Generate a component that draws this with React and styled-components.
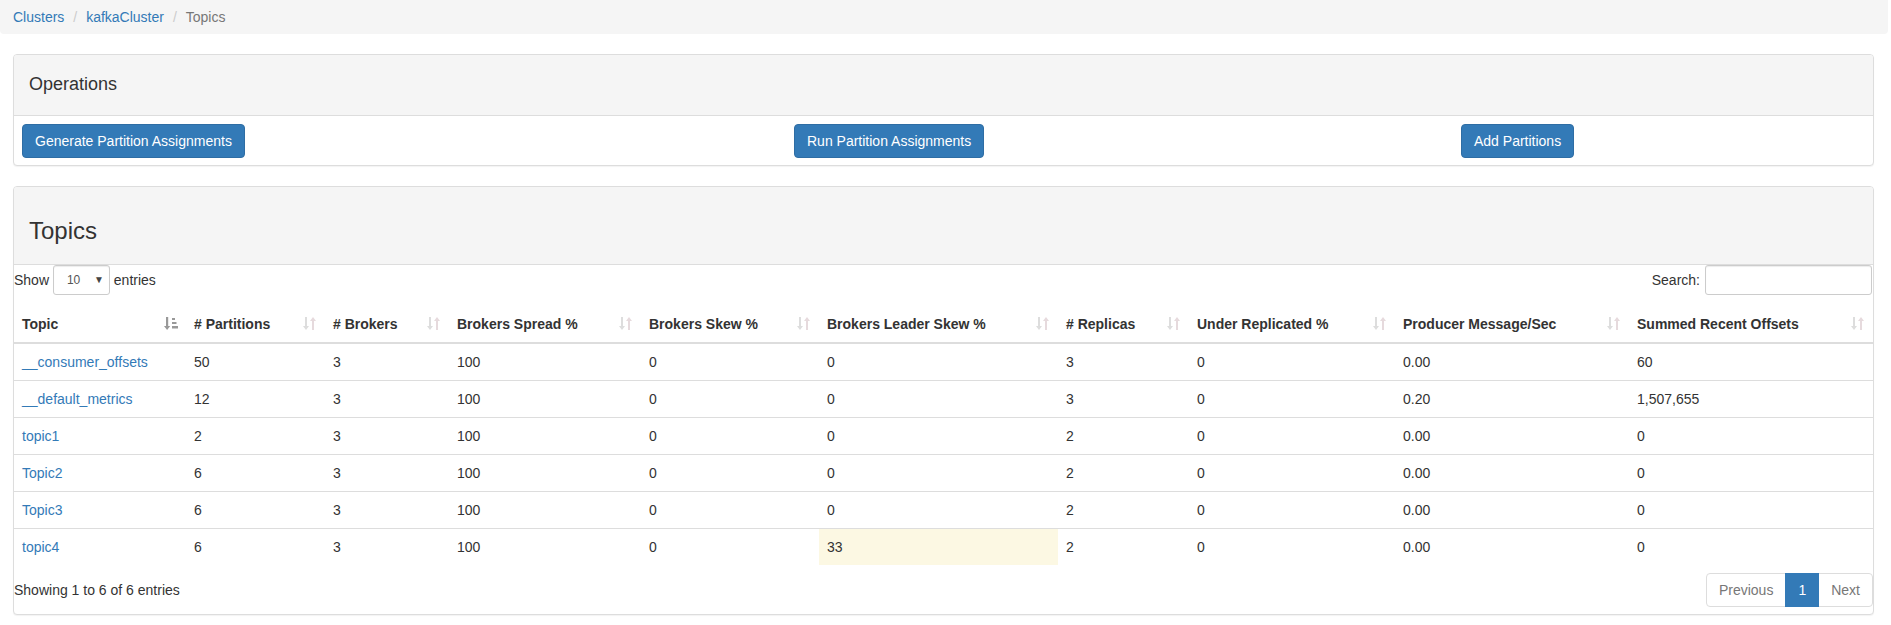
import React from 'react'
import styled, { createGlobalStyle } from 'styled-components'

const GlobalStyle = createGlobalStyle`
  * { box-sizing: border-box; }
  body {
    margin: 0;
    font-family: "Liberation Sans", Arial, Helvetica, sans-serif;
    font-size: 14px;
    line-height: 20px;
    color: #333;
    background: #fff;
  }
`

const Breadcrumb = styled.ol`
  display: flex;
  list-style: none;
  margin: 0 3px 20px 0;
  padding: 7px 13px;
  background-color: #f5f5f5;
  border-radius: 0 0 4px 4px;

  & > li + li::before {
    content: '/\\00a0';
    padding: 0 5px 0 9px;
    color: #ccc;
  }
`

const Crumb = styled.li`
  color: ${props => (props.active ? '#777' : '#337ab7')};
`

const Page = styled.div`
  padding: 0 17px 0 13px;
`

const Panel = styled.div`
  border: 1px solid #ddd;
  border-radius: 4px;
  background: #fff;
  box-shadow: 0 1px 1px rgba(0, 0, 0, 0.05);
  margin-bottom: 20px;
  overflow: hidden;
`

const PanelHeading = styled.div`
  background: #f5f5f5;
  border-bottom: 1px solid #ddd;
  padding: 10px 15px;
`

const H4 = styled.h4`
  margin: 10px 0;
  font-size: 18px;
  font-weight: 500;
  line-height: 19.8px;
`

const H3 = styled.h3`
  margin: 20px 0 10px;
  font-size: 24px;
  font-weight: 500;
  line-height: 27px;
`

const OpsBody = styled.div`
  display: grid;
  grid-template-columns: 772fr 667fr 404fr;
  padding: 8px 8px 7px;
`

const Button = styled.button`
  justify-self: start;
  font-family: inherit;
  font-size: 14px;
  line-height: 20px;
  padding: 6px 12px;
  color: #fff;
  background-color: #337ab7;
  border: 1px solid #2e6da4;
  border-radius: 4px;
  cursor: pointer;
`

const Toolbar = styled.div`
  display: flex;
  justify-content: space-between;
  align-items: center;
  height: 30px;
`

const Label = styled.label`
  display: flex;
  align-items: center;
  white-space: pre;
`

const SelectWrap = styled.span`
  position: relative;
  display: inline-block;
`

const Select = styled.select`
  appearance: none;
  width: 57px;
  height: 30px;
  padding: 5px 10px 5px 13px;
  font-family: inherit;
  font-size: 12px;
  color: #555;
  background: #fff;
  border: 1px solid #ccc;
  border-radius: 3px;
  box-shadow: inset 0 1px 1px rgba(0, 0, 0, 0.075);
`

const Caret = styled.span`
  position: absolute;
  right: 6px;
  top: 5px;
  font-size: 10px;
  color: #444;
  pointer-events: none;
`

const SearchInput = styled.input`
  width: 167px;
  height: 30px;
  margin: 0 1px 0 5px;
  padding: 5px 10px;
  font-family: inherit;
  font-size: 12px;
  border: 1px solid #ccc;
  border-radius: 3px;
  box-shadow: inset 0 1px 1px rgba(0, 0, 0, 0.075);
`

const Table = styled.table`
  width: 100%;
  table-layout: fixed;
  border-collapse: collapse;
  margin-top: 11px;
`

const Th = styled.th`
  text-align: left;
  font-weight: bold;
  padding: 8px;
  line-height: 20px;
  border-bottom: 2px solid #ddd;
  white-space: nowrap;
`

const ThInner = styled.div`
  display: flex;
  justify-content: space-between;
  align-items: center;
`

const Td = styled.td`
  padding: 8px;
  line-height: 20px;
  border-top: 1px solid #ddd;
  background: ${props => (props.warning ? '#fcf8e3' : 'transparent')};
  white-space: nowrap;
`

const Link = styled.a`
  color: #337ab7;
  text-decoration: none;
`

const Footer = styled.div`
  display: flex;
  justify-content: space-between;
  align-items: center;
  padding: 8px 0 7px;
`

const Pager = styled.ul`
  display: flex;
  list-style: none;
  margin: 0;
  padding: 0;
`

const PageItem = styled.li`
  padding: 6px 12px;
  line-height: 20px;
  margin-left: -1px;
  border: 1px solid ${props => (props.active ? '#337ab7' : '#ddd')};
  background: ${props => (props.active ? '#337ab7' : '#fff')};
  color: ${props => (props.active ? '#fff' : '#777')};
  position: ${props => (props.active ? 'relative' : 'static')};
  &:first-child {
    margin-left: 0;
    border-radius: 4px 0 0 4px;
  }
  &:last-child {
    border-radius: 0 4px 4px 0;
  }
`

const SortIcon = ({ sorted }) => (
  <svg width='14' height='15' viewBox='0 0 14 15'>
    {sorted ? (
      <g fill='#999'>
        <rect x='2' y='1' width='2.2' height='10' />
        <path d='M0 10h6.2l-3.1 4z' />
        <rect x='8' y='2' width='3' height='2' />
        <rect x='8' y='6' width='4.5' height='2' />
        <rect x='8' y='10' width='6' height='2.5' />
      </g>
    ) : (
      <g>
        <g fill='#ddd'>
          <rect x='2' y='1' width='2' height='10' />
          <path d='M0 10h6l-3 4z' />
        </g>
        <g fill='#e6dadd'>
          <rect x='9' y='4' width='2' height='10' />
          <path d='M7 5h6l-3-4z' />
        </g>
      </g>
    )}
  </svg>
)

const columns = [
  ['Topic', 172],
  ['# Partitions', 139],
  ['# Brokers', 124],
  ['Brokers Spread %', 192],
  ['Brokers Skew %', 178],
  ['Brokers Leader Skew %', 239],
  ['# Replicas', 131],
  ['Under Replicated %', 206],
  ['Producer Message/Sec', 234],
  ['Summed Recent Offsets', 244]
]

const rows = [
  ['__consumer_offsets', '50', '3', '100', '0', '0', '3', '0', '0.00', '60'],
  ['__default_metrics', '12', '3', '100', '0', '0', '3', '0', '0.20', '1,507,655'],
  ['topic1', '2', '3', '100', '0', '0', '2', '0', '0.00', '0'],
  ['Topic2', '6', '3', '100', '0', '0', '2', '0', '0.00', '0'],
  ['Topic3', '6', '3', '100', '0', '0', '2', '0', '0.00', '0'],
  ['topic4', '6', '3', '100', '0', '33', '2', '0', '0.00', '0']
]

export default function App () {
  return (
    <>
      <GlobalStyle />
      <Breadcrumb>
        <Crumb>Clusters</Crumb>
        <Crumb>kafkaCluster</Crumb>
        <Crumb active>Topics</Crumb>
      </Breadcrumb>
      <Page>
        <Panel>
          <PanelHeading>
            <H4>Operations</H4>
          </PanelHeading>
          <OpsBody>
            <Button>Generate Partition Assignments</Button>
            <Button>Run Partition Assignments</Button>
            <Button>Add Partitions</Button>
          </OpsBody>
        </Panel>

        <Panel>
          <PanelHeading>
            <H3>Topics</H3>
          </PanelHeading>
          <Toolbar>
            <Label>
              {'Show '}
              <SelectWrap>
                <Select defaultValue='10'>
                  <option>10</option>
                  <option>25</option>
                  <option>50</option>
                  <option>100</option>
                </Select>
                <Caret>▼</Caret>
              </SelectWrap>
              {' entries'}
            </Label>
            <Label>
              Search:
              <SearchInput type='search' />
            </Label>
          </Toolbar>
          <Table>
            <colgroup>
              {columns.map(([name, w]) => <col key={name} width={w} />)}
            </colgroup>
            <thead>
              <tr>
                {columns.map(([name], i) => (
                  <Th key={name}>
                    <ThInner>
                      <span>{name}</span>
                      <SortIcon sorted={i === 0} />
                    </ThInner>
                  </Th>
                ))}
              </tr>
            </thead>
            <tbody>
              {rows.map(row => (
                <tr key={row[0]}>
                  {row.map((cell, i) => (
                    <Td key={i} warning={i === 5 && cell === '33'}>
                      {i === 0 ? <Link href='#'>{cell}</Link> : cell}
                    </Td>
                  ))}
                </tr>
              ))}
            </tbody>
          </Table>
          <Footer>
            <span>Showing 1 to 6 of 6 entries</span>
            <Pager>
              <PageItem>Previous</PageItem>
              <PageItem active>1</PageItem>
              <PageItem>Next</PageItem>
            </Pager>
          </Footer>
        </Panel>
      </Page>
    </>
  )
}
